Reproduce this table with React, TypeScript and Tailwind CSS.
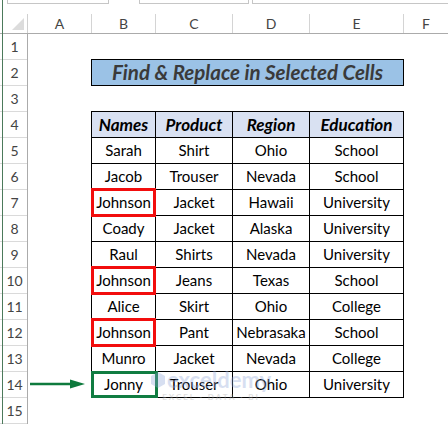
import { JSX } from "react";

type Row = [string, string, string, string];

const rows: Row[] = [
  ["Sarah", "Shirt", "Ohio", "School"],
  ["Jacob", "Trouser", "Nevada", "School"],
  ["Johnson", "Jacket", "Hawaii", "University"],
  ["Coady", "Jacket", "Alaska", "University"],
  ["Raul", "Shirts", "Nevada", "University"],
  ["Johnson", "Jeans", "Texas", "School"],
  ["Alice", "Skirt", "Ohio", "College"],
  ["Johnson", "Pant", "Nebrasaka", "School"],
  ["Munro", "Jacket", "Nevada", "College"],
  ["Jonny", "Trouser", "Ohio", "University"],
];

const headers = ["Names", "Product", "Region", "Education"];

const columns = [
  { label: "A", cls: "w-[64px]" },
  { label: "B", cls: "w-[64px]" },
  { label: "C", cls: "w-[77px]" },
  { label: "D", cls: "w-[77px]" },
  { label: "E", cls: "w-[94px]" },
];

const ArrowRight = (): JSX.Element => (
  <svg width="56" height="12" viewBox="0 0 56 12" className="block">
    <line x1="0" y1="6" x2="42" y2="6" stroke="#0e7a3d" strokeWidth="2.5" />
    <polygon points="40,1.5 55,6 40,10.5" fill="#0e7a3d" />
  </svg>
);

export default function App(): JSX.Element {
  return (
    <div
      className="relative w-[448px] h-[424px] overflow-hidden bg-white text-black"
      style={{ fontFamily: "Lato, 'Open Sans', sans-serif" }}
    >
      {/* formula bar remnants */}
      <div className="relative h-[14px]">
        <div className="absolute left-[7px] top-0 h-[4px] w-[102px] border-x border-b border-[#c6c6c6]" />
        <div className="absolute left-[139px] top-0 h-[4px] w-[110px] border-x border-b border-[#c6c6c6]" />
        <div className="absolute left-[252px] top-0 h-[4px] w-[200px] border-l border-b border-[#c6c6c6]" />
        <div className="absolute left-[2px] top-0 h-[424px] w-px bg-[#4c7a5b]" />
      </div>

      {/* column headers */}
      <div className="flex h-[20px] border-b border-[#ababab] text-[14px] text-[#444]">
        <div className="relative w-[28px] shrink-0 border-r border-[#d0d0d0]">
          <svg width="14" height="14" viewBox="0 0 14 14" className="absolute left-[11px] top-[3px]">
            <polygon points="13,1 13,13 1,13" fill="#dcdcdc" />
          </svg>
        </div>
        {columns.map((c) => (
          <div
            key={c.label}
            className={`${c.cls} shrink-0 flex items-center justify-center border-r border-[#d4d4d4]`}
          >
            {c.label}
          </div>
        ))}
        <div className="flex-1 flex items-center justify-center">F</div>
      </div>

      <div className="flex">
        {/* row headers */}
        <div className="flex w-[28px] shrink-0 flex-col border-r border-[#ababab] text-[14px] text-[#444]">
          {Array.from({ length: 15 }, (_, i) => (
            <div
              key={i}
              className="flex h-[26px] items-center justify-center border-b border-[#dadada] pl-[2px]"
            >
              {i + 1}
            </div>
          ))}
        </div>

        {/* sheet body */}
        <div className="flex flex-col">
          <div className="h-[25px]" />
          <div className="ml-[63px] flex h-[27px] w-[313px] items-center justify-center border border-black bg-[#9bc2e6] text-[20.5px] font-bold italic text-[#3a3a3a]">
            Find &amp; Replace in Selected Cells
          </div>
          <div className="h-[25px]" />

          <div className="flex">
            <div className="flex w-[63px] flex-col justify-end pb-[8px] pl-[2px]">
              <ArrowRight />
            </div>
            <div className="relative">
              <div className="grid grid-cols-[63px_76px_76px_93px] gap-px border border-black bg-black text-[15px]">
                {headers.map((h) => (
                  <div
                    key={h}
                    className="flex h-[25px] items-center justify-center bg-[#d9e1f2] text-[17px] font-bold italic"
                  >
                    {h}
                  </div>
                ))}
                {rows.map((r, ri) =>
                  r.map((v, ci) => {
                    const red = ci === 0 && v === "Johnson";
                    const green = ci === 0 && ri === rows.length - 1;
                    return (
                      <div
                        key={`${ri}-${ci}`}
                        className="relative flex h-[25px] items-center justify-center bg-white"
                      >
                        {v}
                        {red && (
                          <div className="absolute z-10 -left-px -top-[2px] -right-[1px] -bottom-[2px] border-[3px] border-[#f20d0d]" />
                        )}
                        {green && (
                          <div className="absolute z-10 -left-px -top-px -right-[3px] -bottom-px border-[3px] border-[#107c41]" />
                        )}
                      </div>
                    );
                  })
                )}
              </div>

              {/* watermark */}
              <div className="pointer-events-none absolute z-20 left-[60px] bottom-[-5px] flex flex-col items-center opacity-35">
                <div className="flex items-center gap-[2px]">
                  <svg width="14" height="16" viewBox="0 0 14 16">
                    <polygon points="7,0 14,4 14,12 7,16 0,12 0,4" fill="#8fa6d8" />
                  </svg>
                  <span className="text-[22px] font-bold leading-none text-[#8fa6d8]">exceldemy</span>
                </div>
                <span className="text-[8px] font-bold tracking-[2px] text-[#a6a6a6]">EXCEL · DATA · BI</span>
              </div>
            </div>
          </div>
          <div className="h-[26px]" />
        </div>
      </div>
    </div>
  );
}
